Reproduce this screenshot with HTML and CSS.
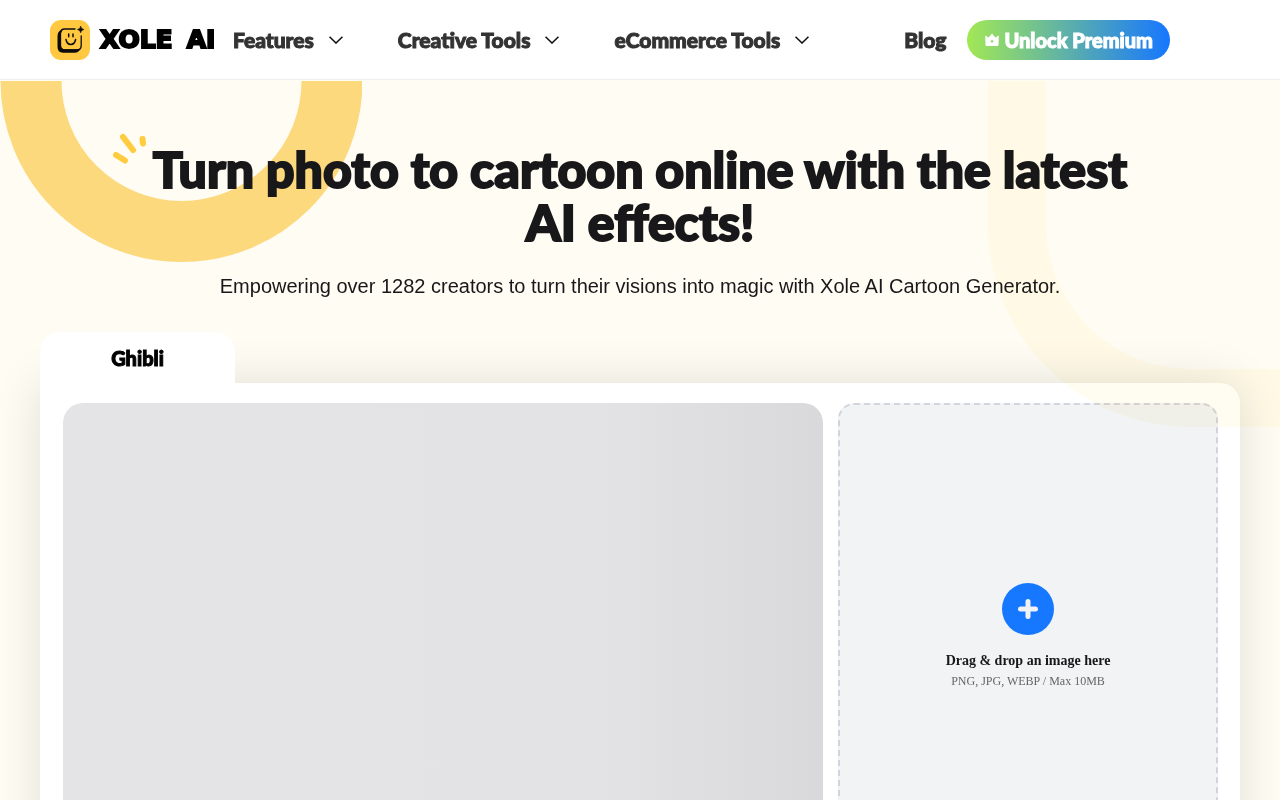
FILE: index.html
```html
<!DOCTYPE html>
<html lang="en">
<head>
<meta charset="utf-8">
<meta name="viewport" content="width=device-width, initial-scale=1">
<title>Xole AI Cartoon Generator</title>
<link rel="stylesheet" href="styles.css">
</head>
<body>
<header class="header">
  <a class="logo" href="#">
    <svg class="logo-mark" viewBox="0 0 40 40" aria-hidden="true">
      <rect width="40" height="40" rx="11" fill="#ffc840"/>
      <path d="M13 8.500 L9.500 11 Q7.500 12.500 7.500 16 V27 Q7.500 32.700 13 32.700 H25 Q27.500 32.700 29.500 30.500 L31 28.500 L27 29.300 H15 Q11 29.300 11 25.500 V13 Z" fill="#0c0c0c"/>
      <path d="M25 9 H15 Q10.500 9 10.500 13.500 V25.500 Q10.500 30 15 30 H26.500 Q31.200 30 31.200 25.500 V16" fill="none" stroke="#0c0c0c" stroke-width="1.300" stroke-linecap="round"/>
      <path d="M30.700 6 Q31 9 34 9.500 Q31 10 30.700 13 Q30.300 10 27.300 9.500 Q30.300 9 30.700 6 Z" fill="#0c0c0c" stroke="#0c0c0c" stroke-width=".5"/>
      <path d="M18.700 14 V16.800 M23 14 V16.800 M16 19.500 Q17 24.500 20.800 24.500 Q24.600 24.500 25.600 19.500" fill="none" stroke="#0c0c0c" stroke-width="1.500" stroke-linecap="round"/>
    </svg>
    <span class="logo-text"><span>XOLE</span> <span>AI</span></span>
  </a>
  <nav class="nav">
    <button class="nav-item" type="button">Features
      <svg class="chevron" viewBox="0 0 14 8" aria-hidden="true"><path d="M.5 .7 L7 7 L13.500 .7"/></svg></button>
    <button class="nav-item" type="button">Creative Tools
      <svg class="chevron" viewBox="0 0 14 8" aria-hidden="true"><path d="M.5 .7 L7 7 L13.500 .7"/></svg></button>
    <button class="nav-item" type="button">eCommerce Tools
      <svg class="chevron" viewBox="0 0 14 8" aria-hidden="true"><path d="M.5 .7 L7 7 L13.500 .7"/></svg></button>
  </nav>
  <div class="actions">
    <a class="nav-item" href="#">Blog</a>
    <button class="premium" type="button">
      <svg class="crown" viewBox="0 0 16 14" aria-hidden="true"><path fill-rule="evenodd" d="M1.200 2.500 L4.700 4.500 L8 .6 L11.300 4.500 L14.800 2.500 L14.500 12 Q14.400 13 13.500 13 H2.500 Q1.600 13 1.500 12 Z M8 6.700 L6.400 8.300 L8 9.900 L9.600 8.300 Z"/></svg>
      Unlock Premium
    </button>
  </div>
</header>
<main class="hero">
  <svg class="ring" viewBox="0 0 362 182" aria-hidden="true"><circle cx="181.500" cy="0" r="150.500"/></svg>
  <svg class="arch" viewBox="0 0 292 346" aria-hidden="true"><path d="M0 0 H58 V144 A144 144 0 0 0 202 288 H292 V346 H202 A202 202 0 0 1 0 144 Z"/></svg>
  <div class="intro">
    <h1 class="title">
      <svg class="sparks" viewBox="0 0 36 32" aria-hidden="true"><path d="M11 4 L21 17 M4 22 L13 27.500 M30.500 6 L31 10.500"/></svg>
      Turn photo to cartoon online with the latest AI effects!</h1>
    <p class="subtitle">Empowering over 1282 creators to turn their visions into magic with Xole AI Cartoon Generator.</p>
  </div>
  <section class="workspace">
    <button class="tab" type="button">Ghibli</button>
    <div class="panel">
      <div class="preview"></div>
      <label class="dropzone" for="photo">
        <input class="file-input" id="photo" type="file" accept=".png,.jpg,.webp">
        <svg class="plus" viewBox="0 0 52 52" aria-hidden="true"><circle cx="26" cy="26" r="26"/><path d="M26 18.500 V33.500 M18.500 26 H33.500"/></svg>
        <span class="drop-title">Drag &amp; drop an image here</span>
        <span class="drop-hint">PNG, JPG, WEBP / Max 10MB</span>
      </label>
    </div>
  </section>
</main>
</body>
</html>
```
FILE: styles.css
```css
* { box-sizing: border-box; }

body {
  margin: 0;
  background: #fffcf3;
  color: #18181a;
  font-family: Lato, "Liberation Sans", sans-serif;
}

button {
  border: 0;
  padding: 0;
  background: none;
  font-family: inherit;
  cursor: pointer;
}

.header {
  display: flex;
  align-items: center;
  height: 80px;
  padding: 0 110px 0 50px;
  background: #fff;
  border-bottom: 1px solid #eeeeef;
}

.logo {
  display: flex;
  align-items: center;
  gap: 10px;
  width: 183px;
  color: #000;
  text-decoration: none;
}

.logo-mark { width: 40px; height: 40px; }

.logo-text {
  display: flex;
  gap: 14px;
  font: 700 25px/40px "DejaVu Sans", sans-serif;
  -webkit-text-stroke: 2px #000;
  stroke-linejoin: round;
}

.nav { display: flex; gap: 55px; }

.nav-item {
  display: flex;
  align-items: center;
  gap: 15px;
  color: #333;
  font-size: 21px;
  font-weight: 900;
  line-height: 24px;
  text-decoration: none;
  white-space: nowrap;
  -webkit-text-stroke: 1px #333;
}

.chevron { width: 14px; height: 8px; }

.chevron path {
  fill: none;
  stroke: #111;
  stroke-width: 1.6;
}

.actions {
  display: flex;
  align-items: center;
  gap: 21px;
  margin-left: auto;
}

.premium {
  display: flex;
  align-items: center;
  justify-content: center;
  gap: 4px;
  height: 40px;
  padding: 0 17px;
  border-radius: 20px;
  background: linear-gradient(90deg, #a2e855, #1677ff);
  color: #fff;
  font-size: 20px;
  font-weight: 900;
  white-space: nowrap;
  -webkit-text-stroke: 1px #fff;
}

.crown { width: 16px; height: 14px; fill: #fff; }

.hero {
  position: relative;
  padding: 63px 40px 0;
  overflow: hidden;
}

.ring {
  position: absolute;
  top: 1px;
  left: 0;
  width: 362px;
}

.ring circle {
  fill: none;
  stroke: #fdd97d;
  stroke-width: 61;
}

.arch {
  position: absolute;
  z-index: 2;
  top: 1px;
  right: 0;
  width: 292px;
  fill: #fffcf2;
  mix-blend-mode: multiply;
  pointer-events: none;
}

.intro {
  position: relative;
  max-width: 1000px;
  margin: 0 auto;
  text-align: center;
}

.title {
  position: relative;
  margin: 0;
  font-size: 50px;
  font-weight: 900;
  line-height: 53px;
  -webkit-text-stroke: 2px #18181a;
}

.sparks {
  position: absolute;
  top: -10px;
  left: -28px;
  width: 36px;
  height: 32px;
}

.sparks path {
  fill: none;
  stroke: #ffcb3f;
  stroke-width: 6;
  stroke-linecap: round;
}

.subtitle {
  margin: 25px 0 34px;
  font: 20px/24px "Liberation Sans", sans-serif;
}

.workspace { position: relative; }

.tab {
  position: relative;
  z-index: 1;
  display: block;
  width: 195px;
  height: 51px;
  border-radius: 20px 20px 0 0;
  background: #fff;
  color: #000;
  font-size: 20px;
  font-weight: 900;
  -webkit-text-stroke: 1px #000;
}

.panel {
  display: grid;
  grid-template-columns: 2fr 1fr;
  gap: 15px;
  padding: 20px 22px 20px 23px;
  border-radius: 0 20px 20px 20px;
  background: #fff;
  box-shadow: 0 0 48px rgba(0, 0, 0, .12);
}

.preview {
  border-radius: 20px;
  background: linear-gradient(90deg, #e4e4e6 0%, #e3e3e5 70%, #d9d9dc 100%);
}

.dropzone {
  display: flex;
  flex-direction: column;
  align-items: center;
  justify-content: center;
  min-height: 467px;
  border: 2px dashed #d1d4dc;
  border-radius: 16px;
  background: #f1f3f5;
  font-family: "Liberation Serif", serif;
  cursor: pointer;
}

.file-input {
  position: absolute;
  width: 1px;
  height: 1px;
  opacity: 0;
}

.plus { width: 52px; height: 52px; }
.plus circle { fill: #1677ff; }

.plus path {
  stroke: #f1f2f5;
  stroke-width: 5;
  stroke-linecap: round;
}

.drop-title {
  margin-top: 16px;
  font-size: 14px;
  font-weight: 700;
  line-height: 20px;
}

.drop-hint {
  margin-top: 1px;
  color: #666;
  font-size: 12px;
  line-height: 18px;
}
```
